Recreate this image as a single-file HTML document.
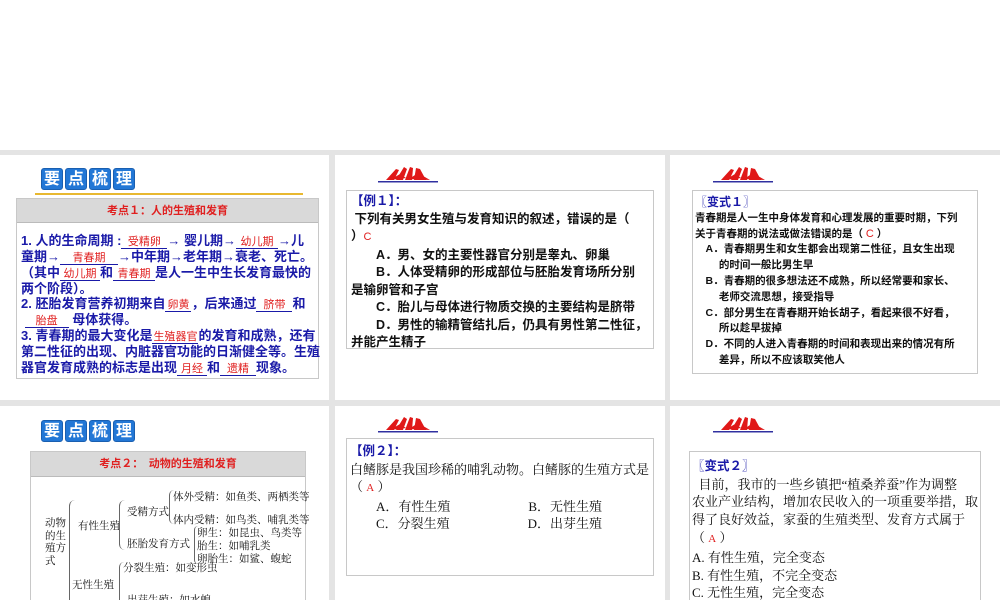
<!DOCTYPE html>
<html><head><meta charset="utf-8"><style>
*{margin:0;padding:0;box-sizing:border-box}
body{width:1000px;height:600px;background:#fff;position:relative;overflow:hidden;font-family:"Liberation Sans","Noto Sans CJK SC",sans-serif}
.bg{position:absolute;left:0;top:150px;width:1000px;height:450px;background:#e4e4e4}
.s{position:absolute;background:#fff;overflow:hidden}
.a{position:absolute;white-space:nowrap}
.badge{position:absolute;display:flex;gap:2px}
.badge span{width:22px;height:22px;background:#2277d6;color:#fff;font-weight:bold;font-size:16px;line-height:22px;text-align:center;border-radius:3px;border:1px solid #1a5fb0}
.box{position:absolute;border:1px solid #c8c8c8;background:#fff}
.hd{position:absolute;left:0;right:0;top:0;background:#d9d9d9;border-bottom:1px solid #bbb;color:#e02020;font-weight:bold;font-size:11px;text-align:center}
.blue{color:#1a1aa8;font-weight:bold;font-size:13px;line-height:15.4px}
.blue div{white-space:nowrap}
.r{color:#e02020;font-weight:normal;font-size:11px;letter-spacing:0}
.u{display:inline-block;border-bottom:1px solid #1a1aa8;text-align:center;line-height:12px}
.t{font-size:12.5px;line-height:17.5px;color:#111}
.t div{white-space:nowrap}
.t3{font-size:10.5px;line-height:15.8px;color:#111;font-weight:bold}
.ex{color:#1a1aa8;font-weight:bold}
.logo{position:absolute;width:62px;height:20px}
.tr{font-family:'Liberation Serif','Noto Serif CJK SC',serif;font-size:10.5px;color:#111}
.br{position:absolute;border-left:1px solid #666;border-radius:6px 0 0 6px}
</style></head><body>
<div class="bg"></div>

<svg width="0" height="0" style="position:absolute"><defs>
<symbol id="lg" viewBox="0 0 62 20"><path d="M10 15 L20 4 L23 5 L18 15 Z M20 15 L28 2 L31 4 L27 15 Z M29 15 L34 2 L37 3 L36 15 Z M38 15 L40 3 L44 4 L50 15 Z M14 15 L24 9 L30 13 Z M33 14 L42 8 L54 15 Z" fill="#e01818"/><rect x="2" y="16" width="60" height="1.5" fill="#3030a0"/></symbol>
</defs></svg>

<!-- slide 1 -->
<div class="s" style="left:0;top:155px;width:329px;height:245px">
  <div class="badge" style="left:41px;top:13px"><span>要</span><span>点</span><span>梳</span><span>理</span></div>
  <div class="a" style="left:35px;top:38px;width:268px;height:2px;background:#e8b830"></div>
  <div class="box" style="left:16px;top:43px;width:303px;height:181px">
    <div class="hd" style="height:24px;line-height:24px">考点１：人的生殖和发育</div>
    <div class="a blue" style="left:4px;top:34px">
<div>1. 人的生命周期 :<span class="u" style="width:46px"><span class="r">受精卵</span></span>→ 婴儿期→<span class="u" style="width:42px"><span class="r">幼儿期</span></span>→儿</div>
<div>童期→<span class="u" style="width:58px"><span class="r">青春期</span></span>→中年期→老年期→衰老、死亡。</div>
<div>（其中<span class="u" style="width:40px"><span class="r">幼儿期</span></span>和<span class="u" style="width:42px"><span class="r">青春期</span></span>是人一生中生长发育最快的</div>
<div>两个阶段）。</div>
<div>2. 胚胎发育营养初期来自<span class="u" style="width:26px"><span class="r">卵黄</span></span>，后来通过<span class="u" style="width:36px"><span class="r">脐带</span></span>和</div>
<div>&nbsp;<span class="u" style="width:44px"><span class="r">胎盘</span></span> 母体获得。</div>
<div>3. 青春期的最大变化是<span class="u" style="width:46px"><span class="r">生殖器官</span></span>的发育和成熟，还有</div>
<div>第二性征的出现、内脏器官功能的日渐健全等。生殖</div>
<div>器官发育成熟的标志是出现<span class="u" style="width:30px"><span class="r">月经</span></span>和<span class="u" style="width:36px"><span class="r">遗精</span></span>现象。</div>
    </div>
  </div>
</div>

<!-- slide 2 -->
<div class="s" style="left:335px;top:155px;width:330px;height:245px">
  <svg class="logo" style="left:41px;top:10px"><use href="#lg"/></svg>
  <div class="box" style="left:11px;top:35px;width:308px;height:159px">
    <div class="a t" style="left:4px;top:2px;font-weight:bold">
<div class="ex">【例１】：</div>
<div>&nbsp;下列有关男女生殖与发育知识的叙述，错误的是（</div>
<div>）<span class="r">C</span></div>
<div>&emsp;&emsp;A．男、女的主要性器官分别是睾丸、卵巢</div>
<div>&emsp;&emsp;B．人体受精卵的形成部位与胚胎发育场所分别</div>
<div>是输卵管和子宫</div>
<div>&emsp;&emsp;C．胎儿与母体进行物质交换的主要结构是脐带</div>
<div>&emsp;&emsp;D．男性的输精管结扎后，仍具有男性第二性征，</div>
<div>并能产生精子</div>
    </div>
  </div>
</div>

<!-- slide 3 -->
<div class="s" style="left:670px;top:155px;width:330px;height:245px">
  <svg class="logo" style="left:41px;top:10px"><use href="#lg"/></svg>
  <div class="box" style="left:22px;top:35px;width:286px;height:184px">
    <div class="a t3" style="left:2px;top:4px">
<div class="ex" style="font-size:12px">〖变式１〗</div>
<div>青春期是人一生中身体发育和心理发展的重要时期，下列</div>
<div>关于青春期的说法或做法错误的是（ <span class="r">C</span> ）</div>
<div>&emsp;A．青春期男生和女生都会出现第二性征，且女生出现</div>
<div>&emsp;&emsp;&nbsp;的时间一般比男生早</div>
<div>&emsp;B．青春期的很多想法还不成熟，所以经常要和家长、</div>
<div>&emsp;&emsp;&nbsp;老师交流思想，接受指导</div>
<div>&emsp;C．部分男生在青春期开始长胡子，看起来很不好看，</div>
<div>&emsp;&emsp;&nbsp;所以趁早拔掉</div>
<div>&emsp;D．不同的人进入青春期的时间和表现出来的情况有所</div>
<div>&emsp;&emsp;&nbsp;差异，所以不应该取笑他人</div>
    </div>
  </div>
</div>

<!-- slide 4 -->
<div class="s" style="left:0;top:406px;width:329px;height:194px">
  <div class="badge" style="left:41px;top:14px"><span>要</span><span>点</span><span>梳</span><span>理</span></div>
  <div class="box" style="left:30px;top:45px;width:276px;height:160px">
    <div class="hd" style="height:25px;line-height:25px">考点２：　动物的生殖和发育</div>
    <div class="tr">
      <div class="a" style="left:14px;top:66px;white-space:normal;width:24px;line-height:12.5px">动物的生殖方式</div>
      <div class="br" style="left:38px;top:48px;width:6px;height:112px"></div>
      <div class="a" style="left:47px;top:66px">有性生殖</div>
      <div class="a" style="left:41px;top:125px">无性生殖</div>
      <div class="br" style="left:88px;top:48px;width:6px;height:50px"></div>
      <div class="a" style="left:96px;top:52px">受精方式</div>
      <div class="a" style="left:96px;top:84px">胚胎发育方式</div>
      <div class="br" style="left:138px;top:38px;width:5px;height:34px"></div>
      <div class="a" style="left:142px;top:37px">体外受精：如鱼类、两栖类等</div>
      <div class="a" style="left:142px;top:60px">体内受精：如鸟类、哺乳类等</div>
      <div class="br" style="left:163px;top:74px;width:4px;height:38px"></div>
      <div class="a" style="left:166px;top:73px">卵生：如昆虫、鸟类等</div>
      <div class="a" style="left:166px;top:86px">胎生：如哺乳类</div>
      <div class="a" style="left:166px;top:99px">卵胎生：如鲨、蝮蛇</div>
      <div class="br" style="left:88px;top:110px;width:5px;height:50px"></div>
      <div class="a" style="left:92px;top:108px">分裂生殖：如变形虫</div>
      <div class="a" style="left:96px;top:140px">出芽生殖：如水螅</div>
    </div>
  </div>
</div>

<!-- slide 5 -->
<div class="s" style="left:335px;top:406px;width:330px;height:194px">
  <svg class="logo" style="left:41px;top:9px"><use href="#lg"/></svg>
  <div class="box" style="left:11px;top:32px;width:308px;height:138px">
    <div class="a t" style="left:3px;top:4px;font-family:'Liberation Serif','Noto Serif CJK SC',serif;font-size:13px">
<div class="ex" style="font-family:'Liberation Sans','Noto Sans CJK SC',sans-serif;font-size:12.5px">【例２】：</div>
<div>白鳍豚是我国珍稀的哺乳动物。白鳍豚的生殖方式是</div>
<div>（ <span class="r">A</span> ）</div>
<div>&emsp;&emsp;A．有性生殖&emsp;&emsp;&emsp;&emsp;&emsp;&emsp;B．无性生殖</div>
<div>&emsp;&emsp;C．分裂生殖&emsp;&emsp;&emsp;&emsp;&emsp;&emsp;D．出芽生殖</div>
    </div>
  </div>
</div>

<!-- slide 6 -->
<div class="s" style="left:670px;top:406px;width:330px;height:194px">
  <svg class="logo" style="left:41px;top:9px"><use href="#lg"/></svg>
  <div class="box" style="left:19px;top:45px;width:292px;height:160px">
    <div class="a t" style="left:2px;top:6px;font-size:13px;line-height:17.5px;font-family:'Liberation Serif','Noto Serif CJK SC',serif">
<div class="ex" style="font-family:'Liberation Sans','Noto Sans CJK SC',sans-serif;font-size:12.5px">〖变式２〗</div>
<div>&nbsp;&nbsp;目前，我市的一些乡镇把“植桑养蚕”作为调整</div>
<div>农业产业结构，增加农民收入的一项重要举措，取</div>
<div>得了良好效益，家蚕的生殖类型、发育方式属于</div>
<div style="line-height:20px">（ <span class="r">A</span> ）</div>
<div>A. 有性生殖，完全变态</div>
<div>B. 有性生殖，不完全变态</div>
<div>C. 无性生殖，完全变态</div>
    </div>
  </div>
</div>
</body></html>
